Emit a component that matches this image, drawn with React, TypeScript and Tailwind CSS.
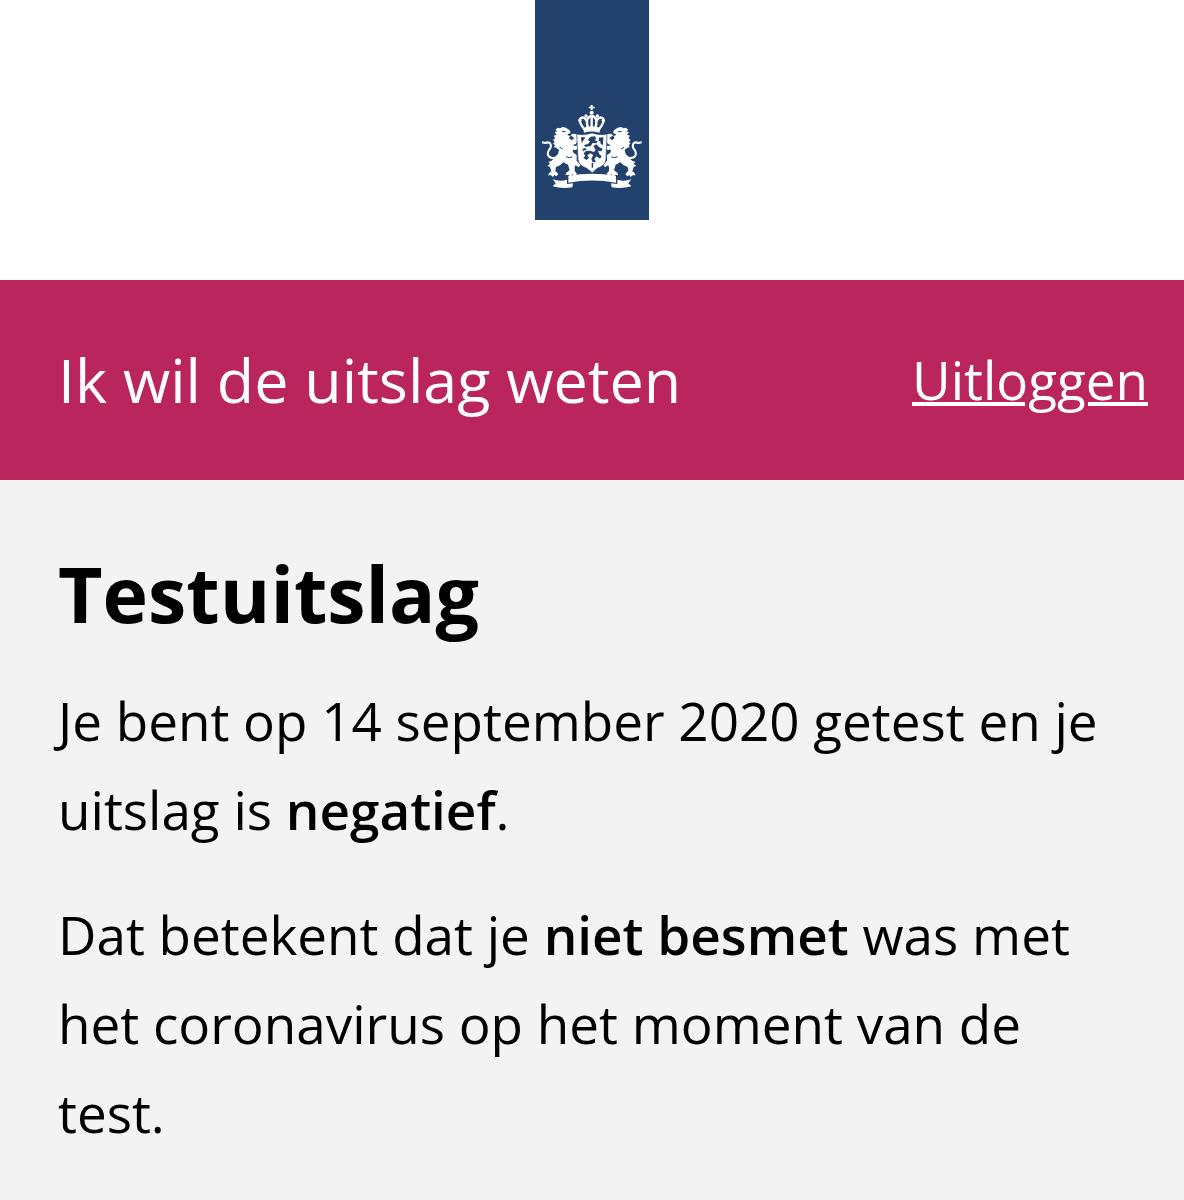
import React from 'react';

function LionSupporter() {
  return (
    <g>
      {/* tail */}
      <path
        d="M36 143 L46 145 Q57 140 62 149 Q65 157 57 166 Q50 178 57 186 Q66 193 78 188"
        fill="none"
        stroke="#fff"
        strokeWidth="6"
        strokeLinejoin="round"
      />
      {/* head, body and legs */}
      <path d="M76 106 L83 99 L90 101 L98 97 L108 99 L119 107 L122 115 L114 118 L113 122 L121 124 L117 130 L125 137 L133 130 L121 122 L129 117 L146 119 L147 131 L138 147 L128 152 L138 154 L143 150 L148 158 L138 166 L128 165 L130 174 L140 181 L140 198 L152 210 L146 218 L137 212 L134 216 L134 228 L141 238 L134 243 L127 239 L121 246 L116 240 L107 242 L108 235 L119 227 L114 210 L100 203 L90 212 L78 217 L76 228 L85 238 L79 245 L73 241 L69 247 L63 242 L54 242 L58 234 L64 230 L60 217 L52 213 L60 208 L55 201 L64 199 L74 188 L84 178 L87 166 L79 159 L72 158 L75 151 L69 147 L74 142 L69 135 L76 131 L71 123 L80 120 L74 113 L82 110 Z" />
      <path
        d="M96 110 L107 111 M89 158 L98 163 M108 186 Q117 191 127 187"
        fill="none"
        stroke="#22416d"
        strokeWidth="3"
      />
    </g>
  );
}

function CoatOfArms() {
  return (
    <svg viewBox="30 25 312 260" className="w-[104px]" fill="#fff" role="img" aria-label="Rijksoverheid">
      {/* crown */}
      <path d="M182 31 h6 v5 h6 v5 h-6 v5 h-6 v-5 h-6 v-5 h6 Z" />
      <circle cx="185" cy="54" r="6" />
      <path
        d="M163 104 Q142 77 153 70 Q165 64 172 84 M174 101 Q164 68 185 64 Q206 68 196 101 M207 104 Q228 77 217 70 Q205 64 198 84 M185 64 V101"
        fill="none"
        stroke="#fff"
        strokeWidth="7"
      />
      <circle cx="168" cy="64" r="5" />
      <circle cx="202" cy="64" r="5" />
      <circle cx="150" cy="77" r="5" />
      <circle cx="220" cy="77" r="5" />
      <path d="M159 100 Q185 90 212 100 L208 114 Q185 107 162 114 Z" />

      <LionSupporter />
      <g transform="translate(371 0) scale(-1 1)">
        <LionSupporter />
      </g>

      {/* shield */}
      <path
        d="M140 119 Q164 123 186 115 Q208 123 231 119 L228 194 Q227 212 202 221 L187 234 L170 221 Q145 212 144 194 Z"
        stroke="#22416d"
        strokeWidth="2"
      />
      <g fill="#22416d">
        <path d="M153 128 L166 128 L155 146 Z" />
        <path d="M182 126 L195 125 L199 132 L193 137 L203 139 L199 146 L188 145 L182 154 L166 157 L162 151 L174 148 L180 140 L173 136 Z" />
        <path d="M207 129 L220 128 L219 151 L212 148 L211 140 L206 138 Z" />
        <path d="M190 154 L199 149 L208 158 L218 162 L214 170 L204 168 L208 179 L215 185 L210 192 L200 185 L193 193 L198 202 L188 203 L184 192 L190 181 L181 176 L172 182 L177 190 L169 196 L160 189 L166 184 L161 176 L168 169 L180 168 L191 172 L197 166 Z" />
        <path d="M157 163 L165 160 L171 164 L160 169 Z" />
        <path d="M185 205 L190 205 L189 219 L185 219 Z" />
      </g>

      {/* ribbon */}
      <path d="M115 243 Q186 231 258 243 L258 264 Q186 251 115 264 Z" />
      <path d="M68 254 Q90 262 111 255 L111 268 L129 266 L127 278 Q97 284 68 275 L77 266 Z" />
      <path d="M304 254 Q282 262 262 255 L262 268 L243 266 L245 278 Q275 284 304 275 L295 266 Z" />
    </svg>
  );
}

export default function App() {
  return (
    <div className="min-h-screen bg-[#f3f3f3] font-['Open_Sans',sans-serif] text-black">
      <header>
        <div className="flex justify-center bg-white pb-15">
          <div className="flex h-[220px] w-[114px] items-end justify-center bg-[#22416d] pb-[30px]">
            <CoatOfArms />
          </div>
        </div>
        <div className="flex h-[200px] items-center justify-between bg-[#b9255c] pr-9 pl-[58px] text-white">
          <span className="text-[61px]">Ik wil de uitslag weten</span>
          <a href="#uitloggen" className="text-[53px] underline decoration-4 underline-offset-2">
            Uitloggen
          </a>
        </div>
      </header>

      <main className="px-[58px] pt-16">
        <h1 className="text-[77px] leading-[100px] font-bold">Testuitslag</h1>
        <p className="mt-8 text-[53px] leading-[89px]">
          Je bent op 14 september 2020 getest en je uitslag is <strong className="font-semibold">negatief</strong>.
        </p>
        <p className="mt-9 text-[53px] leading-[89px]">
          Dat betekent dat je <strong className="font-semibold">niet besmet</strong> was met het coronavirus op het moment van de test.
        </p>
      </main>
    </div>
  );
}
